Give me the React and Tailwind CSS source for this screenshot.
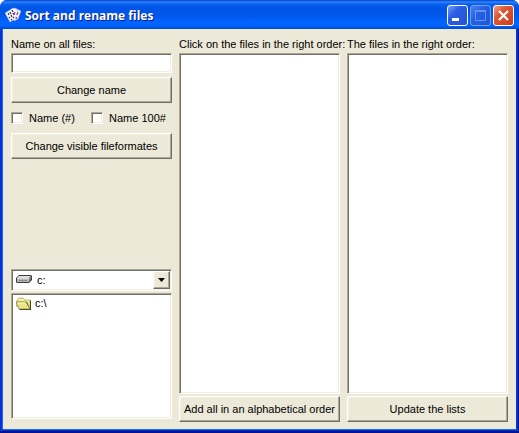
import React from "react";

const sunken =
  "border border-t-[#aca899] border-l-[#aca899] border-r-white border-b-white bg-white shadow-[inset_1px_1px_0_#716f64,inset_-1px_-1px_0_#f1efe2]";
const raised =
  "border border-t-white border-l-white border-r-[#716f64] border-b-[#716f64] bg-[#ece9d8] shadow-[inset_-1px_-1px_0_#aca899,inset_1px_1px_0_#f1efe2]";

function PushButton({ children }) {
  return (
    <button type="button" className={`h-[26px] w-full shrink-0 whitespace-nowrap text-center ${raised}`}>
      {children}
    </button>
  );
}

function CheckOption({ id, children }) {
  return (
    <div className="flex w-20 items-center gap-[6px]">
      <input id={id} type="checkbox" className={`size-3 shrink-0 appearance-none ${sunken}`} />
      <label htmlFor={id} className="whitespace-nowrap">{children}</label>
    </div>
  );
}

function FileList({ id, label, action }) {
  return (
    <section className="flex min-w-0 flex-1 flex-col">
      <label htmlFor={id} className="mb-px h-4 whitespace-nowrap leading-4">{label}</label>
      <select id={id} multiple className={`mb-[2px] min-h-0 w-full flex-1 appearance-none outline-none ${sunken}`} />
      <PushButton>{action}</PushButton>
    </section>
  );
}

function AppIcon() {
  return (
    <svg className="size-4 shrink-0" viewBox="0 0 16 16" aria-hidden="true">
      <path d="M7 3 10 1 16 4 13 12 9 14Z" fill="#fff" stroke="#8fa4e0" strokeWidth=".5" />
      <path d="M0 6 8 1 13 3 10 12 5 15Z" fill="#fff" stroke="#8fa4e0" strokeWidth=".5" />
      <path d="m3 6 1 2m1-3 1 2m1-4 1 2M4 10l1 1m1-3 1 2m1-4 1 2m-3 5 1-1m1-2 1 1" stroke="#2b2752" strokeWidth="1.2" />
      <path d="m13 5-1 3m0 2-1 2M10 5l-1 3" stroke="#a23cae" strokeWidth="1.2" />
    </svg>
  );
}

function DriveIcon() {
  return (
    <svg className="h-[10px] w-4" viewBox="0 0 16 10" aria-hidden="true">
      <path d="M0 4 3 1h12l1 1v4l-3 3H1L0 8Z" fill="#3c3c3c" />
      <path d="M1 4 3 2h12l-2 2Z" fill="#dedede" />
      <path d="M1 4h12v4H1Z" fill="#b8b8b8" />
      <path d="m13 4 2-2v3l-2 3Z" fill="#858585" />
      <path d="M1 4h12v1H1Z" fill="#d8d8d8" />
      <path d="M3 6h8v1H3Z" fill="#8c8c8c" />
    </svg>
  );
}

function FolderIcon() {
  return (
    <svg className="h-[13px] w-4 shrink-0" viewBox="0 0 16 13" aria-hidden="true">
      <path d="M3 12V3h11l1 1v9H4Z" fill="#292914" />
      <path d="M1 10V3l2-2h4l2 2h5v9L11 5H1Z" fill="#f3efa0" stroke="#93903d" strokeWidth=".6" />
      <path d="M0 5h10l4 7H3Z" fill="#e9e58a" stroke="#8c8a3a" strokeWidth=".8" />
      <path d="M2 6h7" stroke="#ffffcc" />
    </svg>
  );
}

const caption = "size-[21px] rounded-[3px] border border-white";

export default function App() {
  return (
    <div className="h-screen bg-white">
      <main className="flex h-full flex-col overflow-hidden rounded-t-[7px] bg-[#0831d9] font-['Liberation_Sans',Arial,sans-serif] text-[11px] leading-4 text-black">
        <header className="flex h-[29px] shrink-0 items-center bg-[linear-gradient(#0842c5_0px,#2c83ff_2px,#0a62ef_4px,#0055e5_8px,#0057ea_15px,#0264ff_22px,#0262fb_26px,#0048ce_29px)] pr-[5px] pl-[5px]">
          <AppIcon />
          <h1 className="ml-1 flex-1 whitespace-nowrap pt-[2px] font-['Open_Sans','Noto_Sans',sans-serif] text-[12px] font-bold leading-4 text-white [text-shadow:1px_1px_0_#0a1883]">
            Sort and rename files
          </h1>
          <div className="flex gap-[2px] pt-[2px]">
            <button type="button" aria-label="Minimize" className={`${caption} bg-[linear-gradient(135deg,#789ff4,#2b5ee5_35%,#2453d2)]`}>
              <svg viewBox="0 0 19 19" className="size-full"><path d="M4 12h7v3H4z" fill="#fff" /></svg>
            </button>
            <button type="button" disabled aria-label="Maximize" className="size-[21px] rounded-[3px] border border-[#6f9df4] bg-[linear-gradient(135deg,#4f83ee,#2360e4_40%,#1c56d8)]">
              <svg viewBox="0 0 19 19" className="size-full"><path d="M4.500 5v9.500h10V5M4 5h11" fill="none" stroke="#6792ee" strokeWidth="1" /><path d="M4 4h11v2H4z" fill="#6792ee" /></svg>
            </button>
            <button type="button" aria-label="Close" className={`${caption} bg-[linear-gradient(135deg,#f0a18a,#df5835_35%,#c83d18)]`}>
              <svg viewBox="0 0 19 19" className="size-full"><path d="m5 5 9 9m0-9-9 9" stroke="#fff" strokeWidth="2.2" /></svg>
            </button>
          </div>
        </header>

        <div className="flex min-h-0 flex-1 bg-[#0831d9] px-[3px] pb-1 shadow-[inset_-1px_-2px_0_#00138c,inset_-2px_-3px_0_#0030d0,inset_2px_0_0_#0831d9,inset_3px_-4px_0_#166aee]">
          <div className="flex min-w-0 flex-1 gap-[7px] bg-[#ece9d8] pt-[7px] pr-2 pb-[7px] pl-2">
            <section className="flex min-w-0 flex-1 flex-col pb-[3px]">
              <label htmlFor="name" className="mb-px h-4 leading-4">Name on all files:</label>
              <input id="name" type="text" className={`mb-1 h-5 w-full px-1 outline-none ${sunken}`} />
              <PushButton>Change name</PushButton>
              <div className="flex h-[30px] shrink-0 items-center">
                <CheckOption id="number">Name (#)</CheckOption>
                <CheckOption id="hundred">Name 100#</CheckOption>
              </div>
              <PushButton>Change visible fileformates</PushButton>
              <div className="flex-1" />
              <div className={`relative mb-[2px] flex h-[22px] w-full shrink-0 p-px ${sunken}`}>
                <select aria-label="Drive" className="h-full w-full appearance-none bg-transparent pl-6 outline-none">
                  <option>c:</option>
                </select>
                <span className="pointer-events-none absolute top-1 left-1"><DriveIcon /></span>
                <span className={`pointer-events-none absolute top-px right-px bottom-px flex w-[17px] items-center justify-center ${raised}`}>
                  <svg className="h-1 w-[7px]" viewBox="0 0 7 4"><path d="M0 0h7L3.500 4Z" fill="#000" /></svg>
                </span>
              </div>
              <ul aria-label="Folders" className={`h-[126px] w-full shrink-0 px-1 py-px ${sunken}`}>
                <li className="flex items-center gap-[3px]"><FolderIcon />c:\</li>
              </ul>
            </section>
            <FileList id="source" label="Click on the files in the right order:" action="Add all in an alphabetical order" />
            <FileList id="ordered" label="The files in the right order:" action="Update the lists" />
          </div>
        </div>
      </main>
    </div>
  );
}
